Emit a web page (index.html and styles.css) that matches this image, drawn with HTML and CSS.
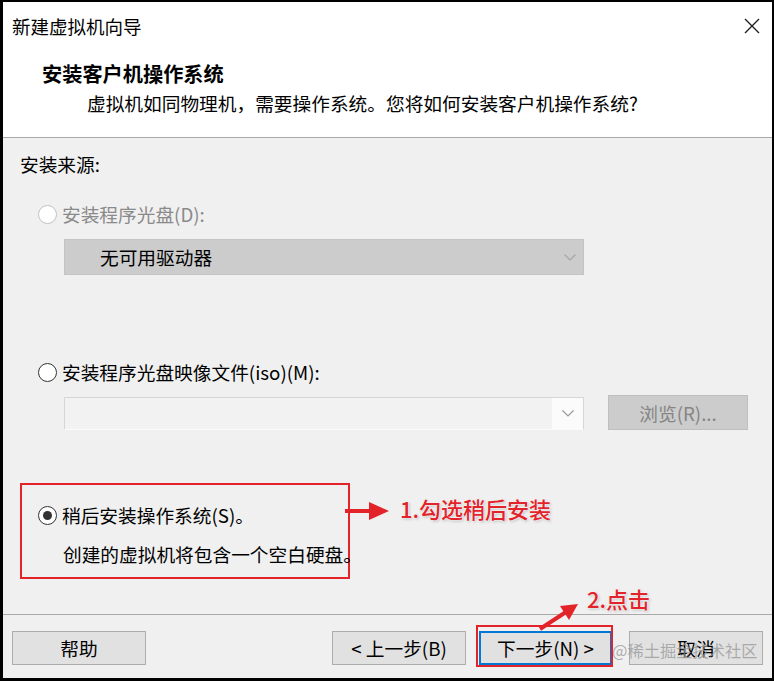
FILE: index.html
```html
<!DOCTYPE html>
<html lang="zh-CN">
<head>
<meta charset="utf-8">
<title>新建虚拟机向导</title>
<link rel="stylesheet" href="styles.css">
</head>
<body>
<div class="dialog">
  <header class="header">
    <div class="titlebar">
      <span class="title">新建虚拟机向导</span>
      <svg class="close" viewBox="0 0 16 16" width="16" height="16"><path d="M1 1 L15 15 M15 1 L1 15" stroke="#1f1f1f" stroke-width="1.4" fill="none"/></svg>
    </div>
    <h1 class="heading">安装客户机操作系统</h1>
    <p class="subtitle">虚拟机如同物理机，需要操作系统。您将如何安装客户机操作系统?</p>
  </header>
  <main class="content">
    <div class="label">安装来源:</div>
    <div class="radio-row disabled row-cd"><span class="radio"></span><span class="radio-text">安装程序光盘(D):</span></div>
    <div class="combo combo-disabled">
      <span class="combo-text">无可用驱动器</span>
      <svg class="chev" viewBox="0 0 12 7" width="12" height="7"><polyline points="0.5,0.5 6,6 11.5,0.5" fill="none" stroke="#a6a6a6" stroke-width="1.2"/></svg>
    </div>
    <div class="radio-row row-iso"><span class="radio"></span><span class="radio-text">安装程序光盘映像文件(iso)(M):</span></div>
    <div class="iso-row">
      <div class="combo combo-empty">
        <span class="combo-field"></span>
        <span class="combo-btn"><svg class="chev" viewBox="0 0 12 7" width="12" height="7"><polyline points="0.5,0.5 6,6 11.5,0.5" fill="none" stroke="#9a9a9a" stroke-width="1.2"/></svg></span>
      </div>
      <button class="browse">浏览(R)...</button>
    </div>
    <div class="highlight">
      <div class="radio-row"><span class="radio checked"></span><span class="radio-text">稍后安装操作系统(S)。</span></div>
      <div class="note">创建的虚拟机将包含一个空白硬盘。</div>
    </div>
  </main>
  <footer class="footer">
    <button class="btn">帮助</button>
    <div class="spacer"></div>
    <button class="btn">&lt; 上一步(B)</button>
    <button class="btn btn-primary">下一步(N) &gt;</button>
    <button class="btn btn-cancel">取消</button>
  </footer>
  <div class="watermark">@稀土掘金技术社区</div>
  <svg class="annot" viewBox="0 0 769 676" width="769" height="676">
    <rect x="342" y="507" width="28" height="4" fill="#e3232a"/>
    <polygon points="366,500 386,509 366,518" fill="#e3232a"/>
    <line x1="537" y1="627" x2="563" y2="610" stroke="#e3232a" stroke-width="4"/>
    <polygon points="575,602 566,618 557,604" fill="#e3232a"/>
    <rect x="474" y="624" width="135" height="40" fill="none" stroke="#e3232a" stroke-width="2"/>
  </svg>
  <div class="tag tag-1">1.勾选稍后安装</div>
  <div class="tag tag-2">2.点击</div>
</div>
</body>
</html>
```

FILE: styles.css
```css
* { box-sizing: border-box; }
html, body { margin: 0; padding: 0; }
body {
  background: #000;
  width: 774px;
  height: 681px;
  overflow: hidden;
  padding: 2px 2px 3px 3px;
  font-family: "Noto Sans CJK SC", "Microsoft YaHei", sans-serif;
  color: #000;
}
.dialog {
  position: relative;
  width: 769px;
  height: 676px;
  background: #f0f0f0;
  display: flex;
  flex-direction: column;
}
.header {
  background: #fff;
  height: 136px;
  border-bottom: 1px solid #a9a9a9;
  flex: none;
}
.titlebar {
  display: flex;
  justify-content: space-between;
  align-items: center;
  padding: 12px 12px 0 9px;
  height: 36px;
}
.title { font-size: 18.5px; line-height: 24px; }
.close { display: block; }
.heading {
  margin: 23px 0 0 39px;
  font-size: 20.2px;
  font-weight: 700;
  line-height: 26px;
}
.subtitle {
  margin: 4px 0 0 84px;
  font-size: 18.7px;
  line-height: 24px;
}
.content {
  height: 476px;
  flex: none;
  padding: 14px 0 0 17px;
  display: flex;
  flex-direction: column;
  align-items: flex-start;
  font-size: 18.7px;
}
.label { line-height: 24px; }
.radio-row {
  display: flex;
  align-items: center;
  height: 24px;
  line-height: 24px;
  padding-left: 18px;
  white-space: nowrap;
}
.radio {
  width: 19px;
  height: 19px;
  border-radius: 50%;
  border: 1px solid #333;
  background: #fff;
  margin-right: 5px;
  flex: none;
  position: relative;
}
.radio.checked::after {
  content: "";
  position: absolute;
  left: 4px;
  top: 4px;
  width: 9px;
  height: 9px;
  border-radius: 50%;
  background: #333;
}
.disabled .radio { border-color: #c2c2c2; }
.disabled .radio-text { color: #8a8a8a; }
.row-cd { margin-top: 26px; }
.combo {
  display: flex;
  align-items: center;
  width: 520px;
  margin-left: 44px;
}
.combo-disabled {
  margin-top: 13px;
  height: 36px;
  background: #cccccc;
  border: 1px solid #c4c4c4;
  padding: 0 7px 0 35px;
  justify-content: space-between;
}
.combo-text { line-height: 24px; }
.chev { display: block; }
.row-iso { margin-top: 85px; }
.iso-row {
  display: flex;
  align-items: flex-start;
  margin-top: 11px;
}
.combo-empty {
  margin-top: 2px;
  height: 33px;
  border: 1px solid #d6d6d6;
  border-bottom-color: #fbfbfb;
  background: #f2f2f2;
  align-items: stretch;
}
.combo-field { flex: 1; }
.combo-btn {
  width: 31px;
  background: #fbfbfb;
  display: flex;
  align-items: center;
  justify-content: center;
}
.browse {
  margin-left: 24px;
  width: 140px;
  height: 35px;
  background: #cccccc;
  border: 1px solid #bfbfbf;
  color: #858585;
  font-family: inherit;
  font-size: 18.7px;
  padding: 0;
}
.highlight {
  margin-top: 53px;
  width: 330px;
  height: 96px;
  border: 2px solid #e3232a;
  padding: 18px 0 0 16px;
}
.highlight .radio-row { padding-left: 0; }
.note {
  margin-top: 15px;
  padding-left: 25px;
  line-height: 24px;
  white-space: nowrap;
}
.footer {
  flex: 1;
  border-top: 1px solid #a9a9a9;
  display: flex;
  align-items: flex-start;
  padding: 16px 9px 0 9px;
}
.spacer { flex: 1; }
.btn {
  width: 134px;
  height: 34px;
  background: #e1e1e1;
  border: 1px solid #adadad;
  font-family: inherit;
  font-size: 18.7px;
  color: #000;
  padding: 0;
  line-height: 30px;
}
.btn-primary {
  width: 133px;
  margin-left: 13px;
  border-color: #0078d7;
  box-shadow: inset 0 0 0 1px #0078d7;
}
.btn-cancel { margin-left: 17px; }
.watermark {
  position: absolute;
  left: 609px;
  top: 636px;
  font-size: 16.3px;
  line-height: 24px;
  color: rgba(150, 150, 150, 0.75);
  white-space: nowrap;
}
.annot {
  position: absolute;
  left: 0;
  top: 0;
  pointer-events: none;
}
.tag {
  position: absolute;
  font-size: 22px;
  line-height: 28px;
  font-weight: 500;
  color: #e3232a;
  white-space: nowrap;
  text-shadow: 0 0 2px #fff, 0 0 2px #fff, 1px 1px 3px rgba(0, 0, 0, 0.3);
}
.tag-1 { left: 397px; top: 492px; }
.tag-2 { left: 584px; top: 582px; }
```
